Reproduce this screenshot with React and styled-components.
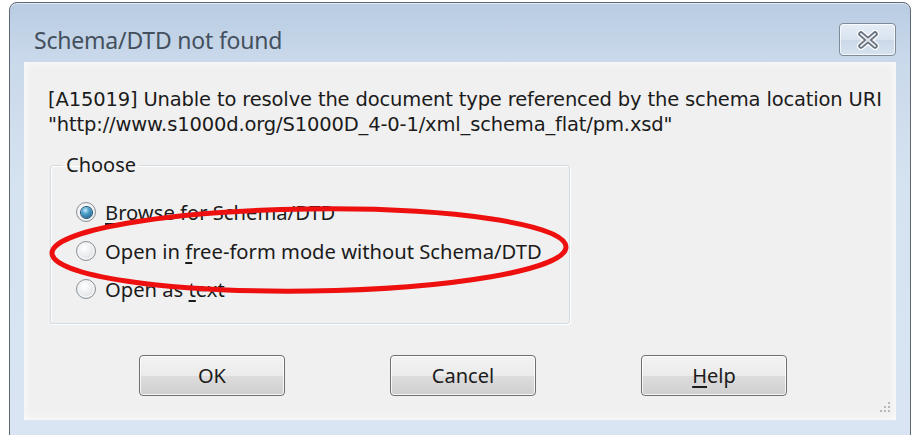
import { styled, createGlobalStyle } from 'styled-components';

const GlobalStyle = createGlobalStyle`
  html, body {
    margin: 0;
    padding: 0;
    background: #ffffff;
    overflow: hidden;
  }
  body {
    font-family: "Noto Sans", "Open Sans", sans-serif;
  }
`;

const Page = styled.div`
  width: 911px;
  height: 435px;
  padding: 2px 0 0 9px;
  box-sizing: border-box;
  overflow: hidden;
`;

const Window = styled.div`
  width: 902px;
  height: 450px;
  box-sizing: border-box;
  border: 1px solid #5d6873;
  border-radius: 8px 8px 0 0;
  background: linear-gradient(180deg, #b8cce2 0%, #c9d8ea 12%, #d5e2f0 40%, #d9e5f2 100%);
  box-shadow: inset 0 1px 0 rgba(255, 255, 255, 0.6);
  display: flex;
  flex-direction: column;
`;

const TitleBar = styled.div`
  height: 59px;
  box-sizing: border-box;
  padding: 14px 14px 0 24px;
  display: flex;
  align-items: center;
  justify-content: space-between;
`;

const Title = styled.span`
  font-size: 23px;
  color: #44505d;
  letter-spacing: -0.2px;
`;

const CloseButton = styled.button`
  width: 57px;
  height: 33px;
  border: 1px solid #7f8b98;
  border-radius: 4px;
  background: linear-gradient(180deg, #e6eef7 0%, #d8e3ef 50%, #cad8e8 51%, #d6e2ef 100%);
  box-shadow: inset 0 0 0 1px rgba(255, 255, 255, 0.7);
  display: flex;
  align-items: center;
  justify-content: center;
  padding: 0;
`;

const Client = styled.div`
  position: relative;
  margin: 0 14px;
  height: 358px;
  background: #f0f0f0;
  box-shadow: inset 0 0 10px rgba(255, 255, 255, 0.9);
  padding: 25px 0 0 24px;
  box-sizing: border-box;
  color: #1b1b1b;
  font-size: 20px;
`;

/* Tahoma-like message face: DejaVu Sans kept tight */
const Message = styled.p`
  margin: 0;
  font-family: "DejaVu Sans", "Noto Sans", sans-serif;
  font-size: 19.5px;
  line-height: 25px;
  letter-spacing: -0.15px;
`;

const GroupBox = styled.fieldset`
  width: 520px;
  height: 170px;
  box-sizing: border-box;
  margin: 17px 0 0 2px;
  padding: 17px 0 0 25px;
  border: 1px solid #d3dbe2;
  border-radius: 3px;
  box-shadow: 1px 1px 0 #ffffff, inset 1px 1px 0 #ffffff;
`;

const Legend = styled.legend`
  padding: 0 3px;
  margin-left: -13px;
  font-size: 20px;
  line-height: 22px;
`;

const RadioRow = styled.label`
  height: 38.5px;
  display: flex;
  align-items: center;
  gap: 9px;
  font-size: 20.2px;
`;

const RadioDot = styled.span`
  width: 20px;
  height: 20px;
  border-radius: 50%;
  box-sizing: border-box;
  border: 1px solid #8a9096;
  background: radial-gradient(circle at 40% 35%, #ffffff 0%, #eceef0 45%, #c8cdd2 100%);
  display: flex;
  align-items: center;
  justify-content: center;
  box-shadow: inset 0 0 0 2px #f2f3f4;

  &::after {
    content: '';
    width: 11px;
    height: 11px;
    border-radius: 50%;
    display: ${(p) => (p.$checked ? 'block' : 'none')};
    background: radial-gradient(circle at 40% 30%, #c9ecfb 0%, #4ea3cf 35%, #164f78 100%);
    box-shadow: 0 0 0 1px #1a4c70;
  }
`;

const Key = styled.span`
  text-decoration: underline;
  text-underline-offset: 3px;
`;

const ButtonRow = styled.div`
  display: flex;
  gap: 105px;
  margin: 31px 0 0 91px;
`;

const PushButton = styled.button`
  width: 146px;
  height: 41px;
  border: 1px solid #707070;
  border-radius: 4px;
  background: linear-gradient(180deg, #f3f3f3 0%, #ebebeb 50%, #dddddd 51%, #cfcfcf 100%);
  box-shadow: inset 0 0 0 1px rgba(255, 255, 255, 0.8);
  font-family: "Noto Sans", "Open Sans", sans-serif;
  font-size: 20px;
  color: #1b1b1b;
  padding: 0;
`;

const Annotation = styled.svg`
  position: absolute;
  left: 22px;
  top: 138px;
  overflow: visible;
  pointer-events: none;
`;

const Grip = styled.svg`
  position: absolute;
  right: 4px;
  bottom: 4px;
`;

const CloseGlyph = () => (
  <svg width="26" height="20" viewBox="0 0 26 20">
    <path d="M6 4 L20 16 M20 4 L6 16" stroke="#ffffff" strokeWidth="8" strokeLinecap="round" />
    <path d="M6 4 L20 16 M20 4 L6 16" stroke="#66717d" strokeWidth="5.5" strokeLinecap="round" />
    <path d="M6 4 L20 16 M20 4 L6 16" stroke="#e4e9ee" strokeWidth="2" strokeLinecap="round" />
  </svg>
);

const GripDots = () => (
  <svg width="16" height="16" viewBox="0 0 16 16">
    {[[12, 2], [8, 6], [12, 6], [4, 10], [8, 10], [12, 10]].map(([x, y]) => (
      <rect key={`${x}-${y}`} x={x} y={y} width="2" height="2" fill="#b5b9bd" />
    ))}
  </svg>
);

export default function App() {
  return (
    <>
      <GlobalStyle />
      <Page>
        <Window>
          <TitleBar>
            <Title>Schema/DTD not found</Title>
            <CloseButton aria-label="Close">
              <CloseGlyph />
            </CloseButton>
          </TitleBar>
          <Client>
            <Message>
              [A15019] Unable to resolve the document type referenced by the schema location URI
              <br />
              "http://www.s1000d.org/S1000D_4-0-1/xml_schema_flat/pm.xsd"
            </Message>
            <GroupBox>
              <Legend>Choose</Legend>
              <RadioRow>
                <RadioDot $checked />
                <span><Key>B</Key>rowse for Schema/DTD</span>
              </RadioRow>
              <RadioRow>
                <RadioDot />
                <span>Open in <Key>f</Key>ree-form mode without Schema/DTD</span>
              </RadioRow>
              <RadioRow>
                <RadioDot />
                <span>Open as <Key>t</Key>ext</span>
              </RadioRow>
            </GroupBox>
            <ButtonRow>
              <PushButton>OK</PushButton>
              <PushButton>Cancel</PushButton>
              <PushButton><Key>H</Key>elp</PushButton>
            </ButtonRow>
            <Annotation width="530" height="100" viewBox="0 0 530 100">
              <ellipse
                cx="263"
                cy="50"
                rx="257"
                ry="41"
                fill="none"
                stroke="#ee0f0f"
                strokeWidth="5"
                transform="rotate(-0.7 263 50)"
              />
            </Annotation>
            <Grip width="16" height="16">
              <GripDots />
            </Grip>
          </Client>
        </Window>
      </Page>
    </>
  );
}
